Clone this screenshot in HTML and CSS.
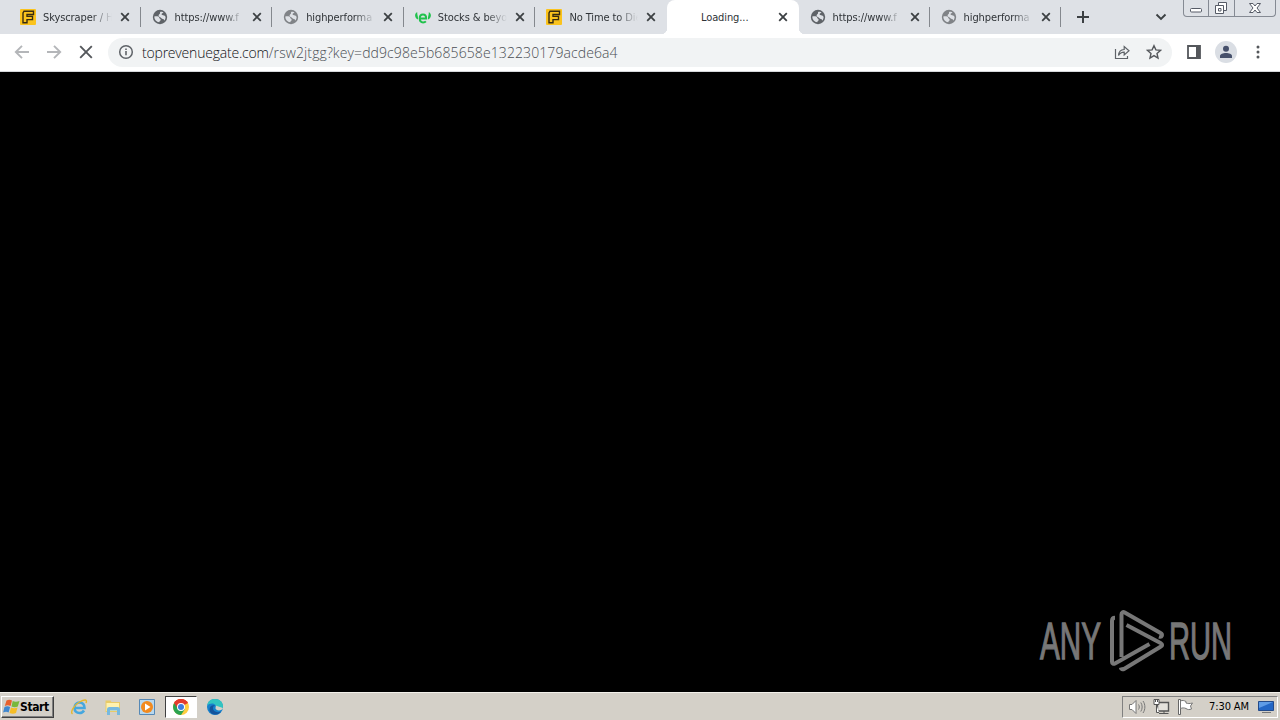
FILE: index.html
```
<!DOCTYPE html>
<html lang="en">
<head>
  <meta charset="utf-8">
  <title>Loading...</title>
  <link rel="stylesheet" href="styles.css">
</head>
<body>
  <svg class="defs" width="0" height="0">
    <symbol id="close" viewBox="0 0 10 10"><path d="M1.2 1.2l7.6 7.6M8.8 1.2L1.2 8.8" stroke="#3c4043" stroke-width="1.8"/></symbol>
    <symbol id="globe" viewBox="0 0 16 16">
      <circle cx="8" cy="8" r="7.2" fill="currentColor"/>
      <path d="M2.300 7.500c2-.5 4.700-.3 5 1.200.2 1.200 1.500.8 1.400 2.200-.1 1-1.300 1-1.500 2.300C4.400 13 2.300 10.500 2.300 7.500zM8 3c1.500-.6 2.700-.3 3.500.2-.5 1.100-1.700.8-1.900 1.800-.2 1.100 1.300 1.300 2.400 1.500 1 .2 1.200 1 1.600 1.400 0 1.500-.6 2.800-1.400 3.600-.3-1.300-.8-1.500-1.500-1.600-1.500-.2-1.700-1.500-2.800-1.800-1-.4-1.600-1.200-1.200-2.200C7.500 5 8.500 4.500 8 3z" fill="#dee1e6"/>
    </symbol>
    <symbol id="fmovies" viewBox="0 0 16 16">
      <rect width="16" height="16" rx="1" fill="#fbc31c"/>
      <path d="M4 2.200h9.500v3.300H7v1.900h5.500v3.200H7v3.200H3V4z" fill="none" stroke="#382c10" stroke-width="1.400"/>
    </symbol>
    <symbol id="etoro" viewBox="0 0 16 16">
      <path d="M2.200 3C-.8 5-.6 8.500 2.800 10.500 3.600 8 2 6 2.200 3zM13.800 3c3 2 2.800 5.500-.6 7.500-.8-2.500.8-4.500.6-7.500z" fill="#20c24c"/>
      <path d="M5 9.500h6.200C11.200 6.700 10 5.500 8 5.500S4.700 7.200 4.700 9.600 6 13.400 8.100 13.400c1.300 0 2.200-.4 2.800-1" fill="none" stroke="#20c24c" stroke-width="2"/>
    </symbol>
  </svg>

  <div class="tab-strip">
    <div class="tab"><svg class="favicon"><use href="#fmovies"/></svg><span class="title">Skyscraper / H</span><svg class="close"><use href="#close"/></svg></div>
    <div class="tab"><svg class="favicon dark"><use href="#globe"/></svg><span class="title">https://www.f</span><svg class="close"><use href="#close"/></svg></div>
    <div class="tab"><svg class="favicon"><use href="#globe"/></svg><span class="title">highperforma</span><svg class="close"><use href="#close"/></svg></div>
    <div class="tab"><svg class="favicon"><use href="#etoro"/></svg><span class="title">Stocks &amp; beyo</span><svg class="close"><use href="#close"/></svg></div>
    <div class="tab last"><svg class="favicon"><use href="#fmovies"/></svg><span class="title">No Time to Die</span><svg class="close"><use href="#close"/></svg></div>
    <div class="tab active"><span class="favicon"></span><span class="title loading">Loading...</span><svg class="close"><use href="#close"/></svg></div>
    <div class="tab narrow"><svg class="favicon dark"><use href="#globe"/></svg><span class="title">https://www.f</span><svg class="close"><use href="#close"/></svg></div>
    <div class="tab narrow"><svg class="favicon"><use href="#globe"/></svg><span class="title">highperforma</span><svg class="close"><use href="#close"/></svg></div>
    <svg class="new-tab" viewBox="0 0 14 14"><path d="M7 1v12M1 7h12" stroke="#3c4043" stroke-width="2"/></svg>
    <svg class="tab-search" viewBox="0 0 12 8"><path d="M1.500 1.500L6 6l4.500-4.500" fill="none" stroke="#3c4043" stroke-width="1.900"/></svg>
    <div class="window-buttons">
      <span><svg width="24" height="16"><rect x="6.500" y="8.500" width="11" height="3.500" rx="1" fill="#fff" stroke="#565b66"/></svg></span>
      <span><svg width="25" height="16"><path d="M9.500 5V2.500h8v8H15M6.500 5.500h8v8h-8zM9.500 8.500h2.500v2.500H9.500z" fill="#fff" stroke="#565b66"/></svg></span>
      <span><svg width="41" height="16"><path d="M14.500 3.500h3.500l2 2.500 2-2.500h3.500l-3.500 4.500 3.500 4.500h-3.500l-2-2.500-2 2.500h-3.500l3.500-4.500z" fill="#fff" stroke="#565b66"/></svg></span>
    </div>
  </div>

  <div class="toolbar">
    <svg class="nav" viewBox="0 0 16 16"><path d="M15 8H2M8 1.800L1.800 8 8 14.200" stroke="#b4b6b9"/></svg>
    <svg class="nav" viewBox="0 0 16 16"><path d="M1 8h13M8 1.800L14.200 8 8 14.200" stroke="#b4b6b9"/></svg>
    <svg class="nav" viewBox="0 0 16 16"><path d="M2.200 2.200l11.600 11.600M13.800 2.200L2.200 13.800" stroke="#54575b"/></svg>
    <div class="omnibox">
      <svg class="info" viewBox="0 0 16 16"><circle cx="8" cy="8" r="6.300" fill="none" stroke="#5f6368" stroke-width="1.500"/><path d="M8 7v4.300M8 4.400V6" stroke="#5f6368" stroke-width="1.600"/></svg>
      <span class="url"><b>toprevenuegate.com</b>/rsw2jtgg?key=dd9c98e5b685658e132230179acde6a4</span>
      <svg class="share" viewBox="0 0 16 16"><path d="M1.500 5v9.500h12V12M4.500 11.500c.2-4 2-5.800 5.700-6V2.500L15 6.800 10.200 11V8.200c-2.700 0-4.400 1-5.700 3.300z" fill="none" stroke="#5f6368" stroke-width="1.200"/></svg>
      <svg class="star" viewBox="0 0 16 16"><path d="M8 1.700l1.900 4.200 4.500.5-3.400 3 1 4.600L8 11.600 4 14l1-4.600-3.400-3 4.500-.5z" fill="none" stroke="#54575b" stroke-width="1.400"/></svg>
    </div>
    <svg class="panel" viewBox="0 0 14 14"><path d="M1 1h12v12H1z" fill="none" stroke="#54575b" stroke-width="1.800"/><path d="M9 1h4v12H9z" fill="#54575b"/></svg>
    <svg class="avatar" viewBox="0 0 22 22"><circle cx="11" cy="11" r="11" fill="#dadee4"/><circle cx="11" cy="7.800" r="3" fill="#46506b"/><path d="M5 17v-1.800C5 12.800 8 12 11 12s6 .8 6 3.200V17z" fill="#46506b"/></svg>
    <svg class="menu" viewBox="0 0 4 14"><circle cx="2" cy="2" r="1.500"/><circle cx="2" cy="7" r="1.500"/><circle cx="2" cy="12" r="1.500"/></svg>
  </div>

  <div class="page">
    <svg class="watermark" width="200" height="68" viewBox="1035 606 200 68">
      <g class="wm-text">
        <text x="1040" y="659" textLength="61" lengthAdjust="spacingAndGlyphs">ANY</text>
        <text x="1169" y="659" textLength="63" lengthAdjust="spacingAndGlyphs">RUN</text>
      </g>
      <path d="M1121.500 657v-42.500c0-2 1.500-3 3.200-2L1160.500 633c2.500 1.500 1.500 4.500-1.500 3.500M1126.500 625l34 18c2.200 1.200 2.200 2.600 0 3.800L1124 669c-1.200.7-2.800.3-3.200-1.500M1149.500 644l-34.500 19.500c-1.600.8-3 0-3-1.800V621c0-2 1-3.200 3-3.200" fill="none" stroke="#777" stroke-width="4"/>
    </svg>
  </div>

  <div class="taskbar">
    <div class="start">
      <svg width="17" height="16" viewBox="0 0 17 16">
        <path d="M3.500 1.500C5.500.3 7.500.5 9 1.500L7.600 7C5.500 6 4 6 1.800 7z" fill="#e8602c"/>
        <path d="M9.700 2c2 1 4.300 1 6.800 0l-1.700 5.500c-2 1-4.500.8-6.300 0z" fill="#78b83c"/>
        <path d="M1.500 8c2-1 4-.8 5.600 0l-1.500 5.500c-1.700-1-3.300-1-5.500 0z" fill="#3f87cf"/>
        <path d="M8 8.500c2 1 4.200 1 6.500 0L13 14c-2 1-4.500.8-6.500 0z" fill="#f6bd25"/>
      </svg>
      Start
    </div>
    <div class="launch">
      <svg viewBox="0 0 18 18"><path d="M5 10h9.500C14.500 6.500 12.500 4.500 9.500 4.500S4.500 7 4.500 10s2 5 5 5c2 0 3.500-.8 4.500-2.500" fill="none" stroke="#45a7df" stroke-width="2.600"/><path d="M2.500 16C0 14 4 7 9.500 4S17.500 1.500 16 5" fill="none" stroke="#e6b72b" stroke-width="1.400"/></svg>
    </div>
    <div class="launch">
      <svg viewBox="0 0 18 18"><path d="M1.500 2.500h5l1 1.500h8.500v10h-14.500z" fill="#e9cb68"/><path d="M2.500 5h12.500v8H2.500z" fill="#fff2ae"/><path d="M3 17v-5.500c0-1.700 1-2.500 2.500-2.500h8c1.500 0 2.500.8 2.500 2.500V17h-3v-4.500H6V17z" fill="#77b9df"/></svg>
    </div>
    <div class="launch">
      <svg viewBox="0 0 18 18"><path d="M1.500 1.500h15v15h-15z" fill="#b8d8ee" stroke="#5689b6"/><circle cx="9" cy="9" r="6" fill="#f28a1e"/><path d="M7 5.500L12.500 9 7 12.500z" fill="#fff"/></svg>
    </div>
    <div class="launch pressed">
      <svg viewBox="0 0 18 18"><circle cx="9" cy="9" r="8" fill="#ffcd40"/><path d="M9 9L2.100 5A8 8 0 0 1 15.900 5z" fill="#e33b2e"/><path d="M9 9L2.100 5A8 8 0 0 0 9 17l4-6z" fill="#2aa350"/><path d="M9 5h6.900A8 8 0 0 0 2.100 5L6 11z" fill="#e33b2e"/><circle cx="9" cy="9" r="4" fill="#fff"/><circle cx="9" cy="9" r="3" fill="#3d7de0"/></svg>
    </div>
    <div class="launch">
      <svg viewBox="0 0 18 18"><circle cx="9" cy="9" r="8" fill="#1681cc"/><path d="M1.200 7.500C2 3 5 1 9 1c5 0 8 3.500 8 7 0 3-2 4-4.500 4-2 0-3-.8-2.200-2C11 8 9 5.500 6 5.500c-2 0-3.800.8-4.800 2z" fill="#32c4c0"/><path d="M7 9.500c-.5 3.500 3.500 6 8 4-4 5.500-11.500 3-11.500-2C3.500 8 6.500 6.500 9 7.500 8 8 7.200 8.500 7 9.500z" fill="#14539c"/><path d="M9.500 9.500c.5-.8.300-1.600 0-2l7.500 2.500c-.6 1.800-2 2.400-4 2.400s-4-1.200-3.500-2.900z" fill="#d4d0c8"/></svg>
    </div>
    <div class="tray">
      <svg width="18" height="16" viewBox="0 0 18 16"><path d="M1.500 5.500H4l4-4v13l-4-4H1.500z" fill="#fff" stroke="#777"/><path d="M10.500 5.500c1 1.500 1 3.500 0 5M12.800 3.500c1.800 2.700 1.800 6.300 0 9M15 2c2.500 3.500 2.500 8.500 0 12" fill="none" stroke="#777"/></svg>
      <svg width="17" height="16" viewBox="0 0 17 16"><path d="M4.500 3.500h11v8.500h-11z" fill="#e4e2dc" stroke="#555" stroke-width="1.400"/><path d="M6 14.500h9.500M11 12v2.500" stroke="#555"/><path d="M1 .5h5v5H1zM3.500 5.500v8H6" fill="#fff" stroke="#555"/><path d="M2.500 1v2M4.500 1v2" stroke="#555"/></svg>
      <svg width="17" height="16" viewBox="0 0 17 16"><path d="M1.500.5h2v15h-2z" fill="#fff" stroke="#666"/><path d="M3.500 2c2-1 3.500-.5 5.500.5v1.500c2 .8 3.500.7 6.500 0L13.500 7l1 3c-2 .8-4 .8-5.500-.5-2-.8-3.500-.8-5.500 0z" fill="#fff" stroke="#777"/></svg>
      <span class="clock">7:30 AM</span>
      <svg width="16" height="14" viewBox="0 0 16 14"><path d="M.5 1.500h15v9H.5z" fill="#2467c5" stroke="#244b8a"/><path d="M1 2h14L1 8z" fill="#5f9ce6"/><path d="M4 12.500h9" stroke="#777"/></svg>
    </div>
  </div>
</body>
</html>
```
FILE: styles.css
```
* { box-sizing: border-box; }
body { margin: 0; width: 1280px; height: 720px; display: flex; flex-direction: column; background: #000; overflow: hidden; font-family: "DejaVu Sans Condensed", "DejaVu Sans", sans-serif; font-stretch: condensed; font-size: 11px; }
svg { display: block; flex: none; }
.defs { position: absolute; }

.tab-strip { display: flex; height: 34px; padding-left: 9px; background: #dee1e6; }
.tab { position: relative; display: flex; align-items: center; flex: none; width: 131.6px; padding-left: 11px; }
.tab.narrow { width: 131px; }
.tab::after { content: ""; flex: none; width: 1px; height: 20px; margin-left: 9.6px; background: #84888e; }
.tab.last::after, .tab.active::after { background: none; }
.favicon { width: 16px; height: 16px; flex: none; color: #808387; }
.favicon.dark { color: #5f6368; }
.title { flex: none; width: 69px; margin: 0 8px 0 7px; white-space: nowrap; color: #2f3337; letter-spacing: -0.1px; -webkit-mask-image: linear-gradient(90deg, #000 70%, transparent); mask-image: linear-gradient(90deg, #000 70%, transparent); }
.title.loading { -webkit-mask-image: none; mask-image: none; }
.close { width: 10px; height: 10px; }
.tab.active { background: #fff; border-radius: 8px 8px 0 0; }
/* curved feet of the active tab */
.tab.active::before { content: ""; position: absolute; left: -6px; right: -6px; bottom: 0; height: 6px; background: radial-gradient(circle at 0 0, transparent 6px, #fff 6.5px) left / 6px 6px no-repeat, radial-gradient(circle at 100% 0, transparent 6px, #fff 6.5px) right / 6px 6px no-repeat; }
.new-tab { width: 14px; height: 14px; margin: 10px 0 0 15px; }
.tab-search { width: 12px; height: 8px; margin: 13px 0 0 65px; }
.window-buttons { display: flex; width: 93px; height: 17px; margin-left: 16px; border: 1px solid #858a93; border-top: 0; border-radius: 0 0 4px 4px; }
.window-buttons span + span { border-left: 1px solid #858a93; }

.toolbar { display: flex; align-items: center; height: 38px; padding: 0 0 1px 14px; background: #fff; border-bottom: 1px solid #d5d7da; }
.nav { width: 16px; height: 16px; margin-right: 16px; fill: none; stroke-width: 1.9; }
.omnibox { display: flex; align-items: center; width: 1064px; height: 29px; margin-left: -2px; padding: 0 10px; border-radius: 15px; background: #f1f3f4; }
.info { width: 16px; height: 16px; }
.url { flex: 1; margin-left: 8px; font-family: "Open Sans", sans-serif; font-stretch: normal; font-weight: 300; font-size: 14px; letter-spacing: 0.1px; color: #4a4e53; white-space: nowrap; }
.url b { font-weight: 350; letter-spacing: -0.2px; color: #101114; }
.share { width: 16px; height: 16px; margin-right: 16px; }
.star { width: 16px; height: 16px; }
.panel { width: 14px; height: 14px; margin-left: 15px; }
.avatar { width: 22px; height: 22px; margin-left: 14px; }
.menu { width: 4px; height: 14px; margin-left: 19px; fill: #54575b; }

.page { display: flex; flex: 1; align-items: flex-end; justify-content: flex-end; padding: 0 45px 18px 0; background: #000; }
.watermark { overflow: visible; }
.wm-text { font-family: "Liberation Sans Narrow", "Liberation Sans", sans-serif; font-size: 52px; fill: #777; stroke: #777; stroke-width: 1.3; }

.taskbar { display: flex; align-items: center; height: 28px; padding: 0 2px 0 1px; background: #d4d0c8; border-top: 1px solid #f2f0ea; }
.start { display: flex; align-items: center; width: 53px; height: 22px; padding-left: 1px; margin-right: 9px; border: 1px solid; border-color: #fff #404040 #404040 #fff; box-shadow: inset -1px -1px #808080; font-weight: bold; font-size: 12px; letter-spacing: -0.4px; color: #000; }
.launch { display: flex; align-items: center; justify-content: center; width: 32px; height: 22px; margin-right: 2px; }
.launch svg { width: 18px; height: 18px; }
.launch.pressed { background: #fff; border: 1px solid; border-color: #404040 #fff #fff #404040; }
.tray { display: flex; align-items: center; width: 156px; height: 22px; margin-left: auto; padding-left: 5px; gap: 7px; border: 1px solid; border-color: #808080 #fff #fff #808080; color: #000; }
.clock { width: 42px; margin-left: 8px; white-space: nowrap; letter-spacing: -0.1px; }
```
